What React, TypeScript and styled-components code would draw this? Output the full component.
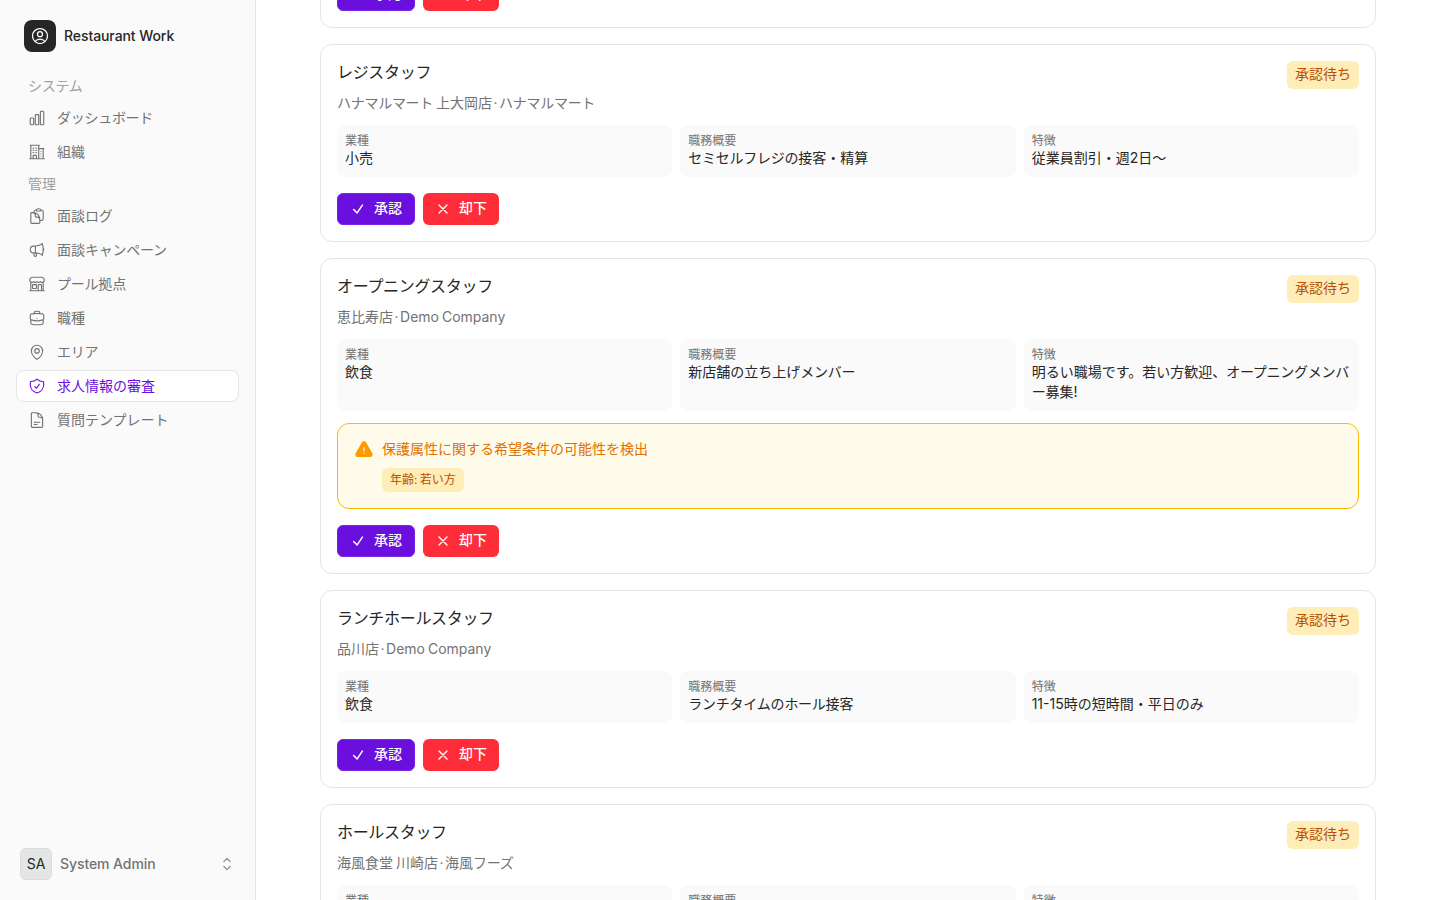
import * as React from 'react';
import styled, { createGlobalStyle } from 'styled-components';
import {
	HiOutlineBriefcase,
	HiOutlineBuildingOffice2,
	HiOutlineBuildingStorefront,
	HiOutlineChartBar,
	HiOutlineCheck,
	HiOutlineChevronUpDown,
	HiOutlineClipboardDocument,
	HiOutlineDocumentText,
	HiOutlineMapPin,
	HiOutlineMegaphone,
	HiOutlineShieldCheck,
	HiOutlineUserCircle,
	HiOutlineXMark,
	HiExclamationTriangle
} from 'react-icons/hi2';

const GlobalStyle = createGlobalStyle`
	html, body, #root {
		margin: 0;
		height: 100%;
	}
	body {
		overflow: hidden;
		background: #fff;
		color: #262626;
		font-family: Inter, "Noto Sans CJK JP", sans-serif;
		font-size: 14px;
		line-height: 20px;
	}
	* {
		box-sizing: border-box;
	}
`;

const Layout = styled.div`
	display: flex;
	height: 100vh;
`;

const Sidebar = styled.aside`
	display: flex;
	flex-direction: column;
	flex: 0 0 256px;
	background: #fafafa;
	border-right: 1px solid #e5e5e5;
	padding: 20px 16px 20px;
`;

const Brand = styled.div`
	display: flex;
	align-items: center;
	gap: 8px;
	padding-left: 8px;
	margin-bottom: 18px;
	font-weight: 500;
	letter-spacing: -0.08px;
	color: #262626;
`;

const BrandMark = styled.div`
	display: flex;
	align-items: center;
	justify-content: center;
	width: 32px;
	height: 32px;
	border-radius: 8px;
	background: #262626;
	color: #fff;
	font-size: 20px;
`;

const GroupLabel = styled.div`
	display: flex;
	align-items: center;
	height: 32px;
	padding-left: 12px;
	color: #a1a1a1;
`;

const NavList = styled.nav`
	display: flex;
	flex-direction: column;
	gap: 2px;
`;

const NavItem = styled.a<{ $active?: boolean }>`
	display: flex;
	align-items: center;
	gap: 11px;
	height: 32px;
	padding-left: 11px;
	border: 1px solid ${(p) => (p.$active ? '#e5e5e5' : 'transparent')};
	border-radius: 8px;
	background: ${(p) => (p.$active ? '#fff' : 'transparent')};
	color: ${(p) => (p.$active ? '#6a0fdd' : '#737373')};
	svg {
		flex: none;
		font-size: 18px;
	}
`;

const UserRow = styled.div`
	display: flex;
	align-items: center;
	gap: 8px;
	margin-top: auto;
	padding-left: 4px;
	color: #737373;
	font-weight: 500;
	letter-spacing: -0.08px;
	svg {
		margin-left: auto;
		margin-right: 2px;
		font-size: 20px;
		color: #8f8f8f;
	}
`;

const Avatar = styled.div`
	display: flex;
	align-items: center;
	justify-content: center;
	width: 32px;
	height: 32px;
	border: 1px solid #dcdcdc;
	border-radius: 6px;
	background: #e5e5e5;
	color: #262626;
	font-weight: 400;
`;

const Main = styled.main`
	flex: 1;
	overflow-y: auto;
	padding: 32px 64px;
	scrollbar-width: none;
`;

const CardList = styled.div`
	display: flex;
	flex-direction: column;
	gap: 16px;
`;

const Card = styled.section`
	padding: 16px;
	border: 1px solid #e5e5e5;
	border-radius: 12px;
	background: #fff;
`;

const CardHead = styled.header`
	display: flex;
	justify-content: space-between;
	align-items: flex-start;
	margin-bottom: 12px;
`;

const Title = styled.h3`
	margin: -1px 0 9px;
	font-size: 16px;
	font-weight: 400;
	line-height: 24px;
	color: #262626;
`;

const Subtitle = styled.p`
	margin: 0;
	color: #737373;
	word-spacing: -1px;
`;

const Dot = styled.span`
	margin: 0 1.5px;
`;

// kana in the reference sets a little tighter than Noto's full-width advance
const Kana = styled.span`
	letter-spacing: -0.02em;
`;

const StatusBadge = styled.span`
	padding: 3px 8px 5px;
	border-radius: 6px;
	background: #ffedb8;
	color: #bb4d00;
`;

const FieldGrid = styled.div`
	display: grid;
	grid-template-columns: repeat(3, minmax(0, 1fr));
	gap: 8px;
`;

const Field = styled.div`
	padding: 8px 8px 9px;
	border-radius: 8px;
	background: #fafafa;
`;

const FieldLabel = styled.div`
	font-size: 12px;
	line-height: 16px;
	color: #737373;
`;

const FieldValue = styled.div`
	margin-top: -1px;
	color: #262626;
`;

const Alert = styled.div`
	display: flex;
	gap: 8px;
	margin-top: 12px;
	padding: 16px;
	border: 1px solid #ffb900;
	border-radius: 12px;
	background: #fffbeb;
	color: #e17100;
	svg {
		flex: none;
		font-size: 20px;
		color: #fe9a00;
	}
`;

const AlertTitle = styled.div`
	margin: -1px 0 1px;
`;

const AlertTag = styled.span`
	display: inline-block;
	margin-top: 8px;
	padding: 4px 8px;
	border-radius: 6px;
	background: #ffedb8;
	color: #bb4d00;
	font-size: 12px;
	line-height: 16px;
	word-spacing: -1px;
`;

const Actions = styled.div`
	display: flex;
	gap: 8px;
	margin-top: 16px;
`;

const ActionButton = styled.button<{ $danger?: boolean }>`
	display: flex;
	align-items: center;
	gap: 8px;
	height: 32px;
	padding: 0 12px;
	border: ${(p) => (p.$danger ? '0' : '1px solid #7a22e6')};
	border-radius: 6px;
	background: ${(p) => (p.$danger ? '#ff2d3a' : '#6a0fdd')};
	color: #fff;
	font: inherit;
	font-weight: 500;
`;

const ButtonLabel = styled.span`
	margin-bottom: 2px;
`;

const CheckIcon = styled(HiOutlineCheck)`
	width: 14px;
	height: 14px;
	margin: 0 1px;
	stroke-width: 2.6;
`;

const CrossIcon = styled(HiOutlineXMark)`
	width: 16px;
	height: 16px;
	stroke-width: 2;
`;

type Job = {
	title: string;
	place: string;
	company: string;
	kind: string;
	summary: string;
	feature: string;
	flag?: string;
};

const jobs: Job[] = [
	{
		title: 'ホールスタッフ',
		place: '渋谷店',
		company: 'Demo Company',
		kind: '飲食',
		summary: '接客・配膳',
		feature: '未経験歓迎'
	},
	{
		title: 'レジスタッフ',
		place: 'ハナマルマート 上大岡店',
		company: 'ハナマルマート',
		kind: '小売',
		summary: 'セミセルフレジの接客・精算',
		feature: '従業員割引・週2日〜'
	},
	{
		title: 'オープニングスタッフ',
		place: '恵比寿店',
		company: 'Demo Company',
		kind: '飲食',
		summary: '新店舗の立ち上げメンバー',
		feature: '明るい職場です。若い方歓迎、オープニングメンバー募集!',
		flag: '年齢: 若い方'
	},
	{
		title: 'ランチホールスタッフ',
		place: '品川店',
		company: 'Demo Company',
		kind: '飲食',
		summary: 'ランチタイムのホール接客',
		feature: '11-15時の短時間・平日のみ'
	},
	{
		title: 'ホールスタッフ',
		place: '海風食堂 川崎店',
		company: '海風フーズ',
		kind: '飲食',
		summary: '接客・配膳',
		feature: '未経験歓迎'
	}
];

const kana = (text: string) =>
	text.split(/([ァ-ヶー]+)/).map((part, i) => (i % 2 ? <Kana key={i}>{part}</Kana> : part));

const JobCard = ({ job }: { job: Job }) => (
	<Card>
		<CardHead>
			<div>
				<Title>{kana(job.title)}</Title>
				<Subtitle>
					{kana(job.place)}
					<Dot>·</Dot>
					{kana(job.company)}
				</Subtitle>
			</div>
			<StatusBadge>承認待ち</StatusBadge>
		</CardHead>
		<FieldGrid>
			<Field>
				<FieldLabel>業種</FieldLabel>
				<FieldValue>{job.kind}</FieldValue>
			</Field>
			<Field>
				<FieldLabel>職務概要</FieldLabel>
				<FieldValue>{kana(job.summary)}</FieldValue>
			</Field>
			<Field>
				<FieldLabel>特徴</FieldLabel>
				<FieldValue>{kana(job.feature)}</FieldValue>
			</Field>
		</FieldGrid>
		{job.flag ? (
			<Alert>
				<HiExclamationTriangle />
				<div>
					<AlertTitle>保護属性に関する希望条件の可能性を検出</AlertTitle>
					<AlertTag>{job.flag}</AlertTag>
				</div>
			</Alert>
		) : null}
		<Actions>
			<ActionButton>
				<CheckIcon />
				<ButtonLabel>承認</ButtonLabel>
			</ActionButton>
			<ActionButton $danger>
				<CrossIcon />
				<ButtonLabel>却下</ButtonLabel>
			</ActionButton>
		</Actions>
	</Card>
);

const App = () => {
	const mainRef = React.useRef<HTMLElement>(null);

	React.useLayoutEffect(() => {
		if (mainRef.current) mainRef.current.scrollTop = 202;
	}, []);

	return (
		<Layout>
			<GlobalStyle />
			<Sidebar>
				<Brand>
					<BrandMark>
						<HiOutlineUserCircle />
					</BrandMark>
					Restaurant Work
				</Brand>
				<GroupLabel>{kana('システム')}</GroupLabel>
				<NavList>
					<NavItem>
						<HiOutlineChartBar />
						<span>{kana('ダッシュボード')}</span>
					</NavItem>
					<NavItem>
						<HiOutlineBuildingOffice2 />
						組織
					</NavItem>
				</NavList>
				<GroupLabel>管理</GroupLabel>
				<NavList>
					<NavItem>
						<HiOutlineClipboardDocument />
						<span>{kana('面談ログ')}</span>
					</NavItem>
					<NavItem>
						<HiOutlineMegaphone />
						<span>{kana('面談キャンペーン')}</span>
					</NavItem>
					<NavItem>
						<HiOutlineBuildingStorefront />
						<span>{kana('プール拠点')}</span>
					</NavItem>
					<NavItem>
						<HiOutlineBriefcase />
						職種
					</NavItem>
					<NavItem>
						<HiOutlineMapPin />
						<span>{kana('エリア')}</span>
					</NavItem>
					<NavItem $active>
						<HiOutlineShieldCheck />
						求人情報の審査
					</NavItem>
					<NavItem>
						<HiOutlineDocumentText />
						質問テンプレート
					</NavItem>
				</NavList>
				<UserRow>
					<Avatar>SA</Avatar>
					System Admin
					<HiOutlineChevronUpDown />
				</UserRow>
			</Sidebar>
			<Main ref={mainRef}>
				<CardList>
					{jobs.map((job, i) => (
						<JobCard key={i} job={job} />
					))}
				</CardList>
			</Main>
		</Layout>
	);
};

export default App;
